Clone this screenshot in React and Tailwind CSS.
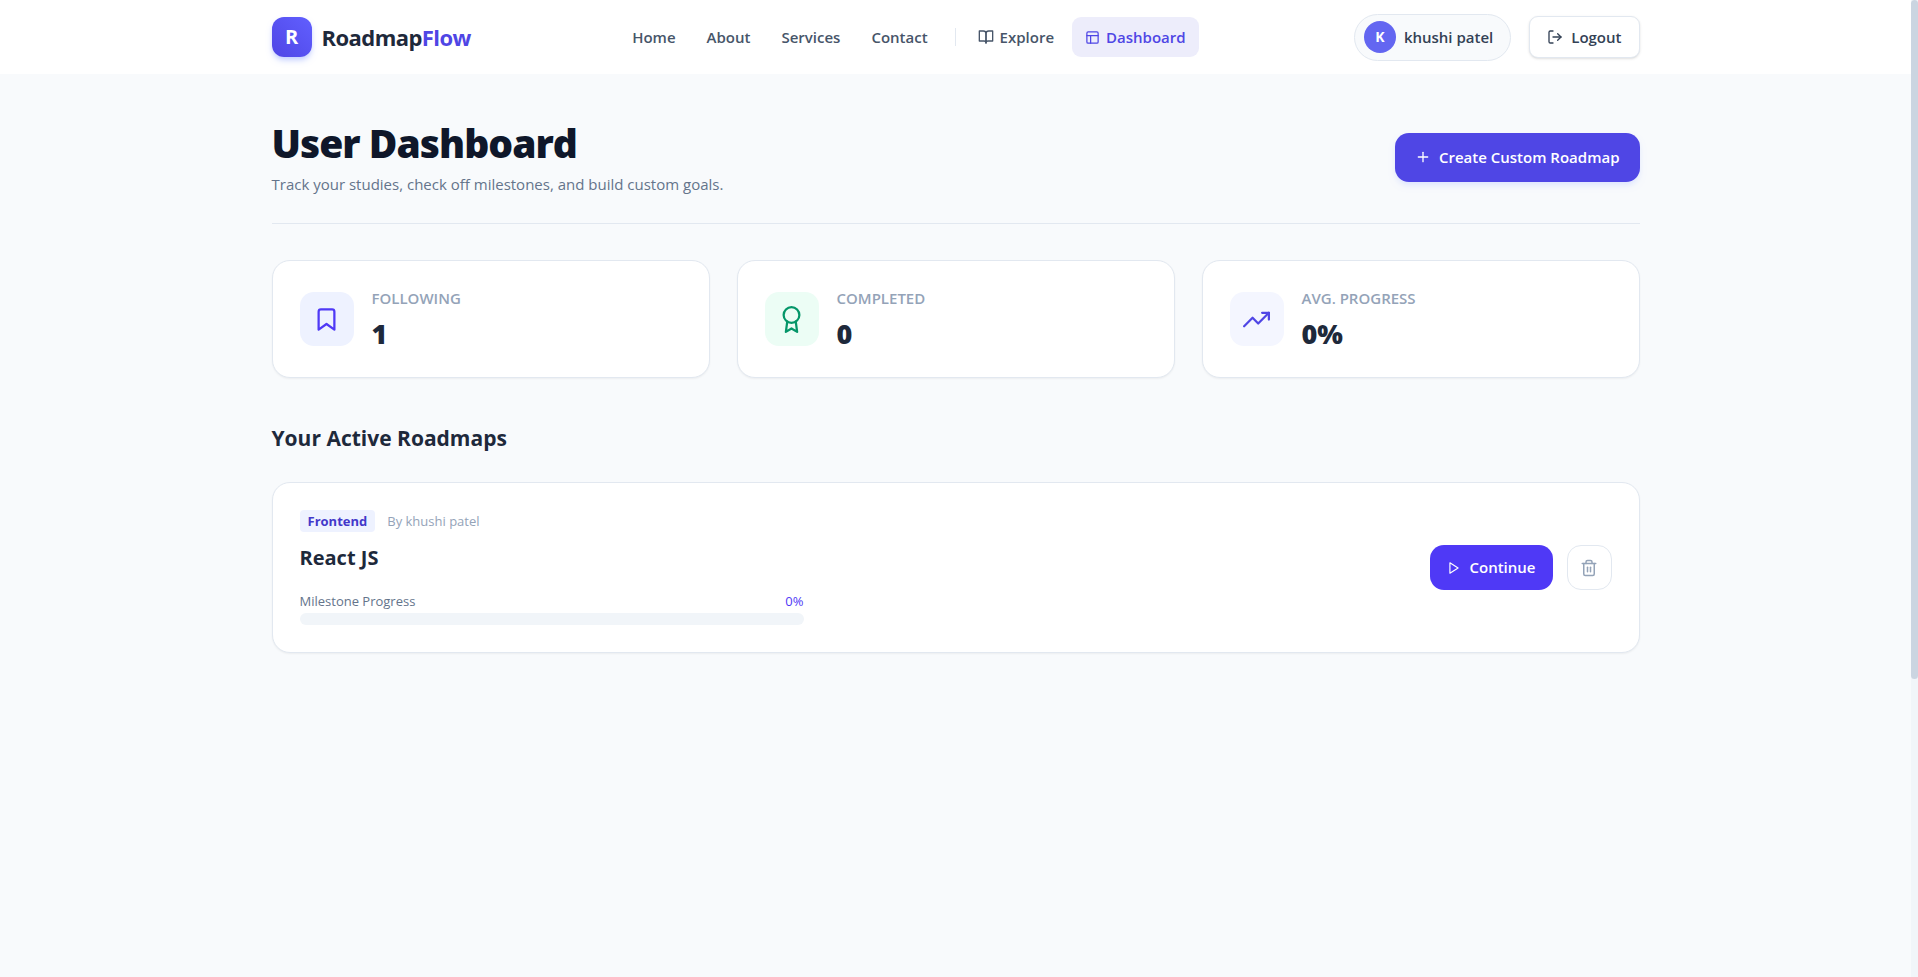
import {
  FiAward,
  FiBookmark,
  FiBookOpen,
  FiLayout,
  FiLogOut,
  FiPlay,
  FiPlus,
  FiTrash2,
  FiTrendingUp,
} from "react-icons/fi";

const links = ["Home", "About", "Services", "Contact"];

const stats = [
  { label: "FOLLOWING", value: "1", Icon: FiBookmark, tone: "bg-[#eef2ff] text-[#4f39f6]" },
  { label: "COMPLETED", value: "0", Icon: FiAward, tone: "bg-[#ecfdf5] text-[#059669]" },
  { label: "AVG. PROGRESS", value: "0%", Icon: FiTrendingUp, tone: "bg-[#f4f6ff] text-[#4f46e5]" },
];

const roadmaps = [
  { id: "react-js", title: "React JS", category: "Frontend", author: "khushi patel", progress: 0 },
];

function Header() {
  return (
    <header className="bg-white">
      <div className="mx-auto flex h-[74px] max-w-[1400px] items-center justify-between px-4">
        <a href="#home" className="flex items-center gap-[10px]">
          <span className="flex size-10 items-center justify-center rounded-xl bg-linear-to-tr from-[#4f46e5] to-[#615fff] text-xl font-bold text-white shadow-md shadow-indigo-200">
            R
          </span>
          <span className="text-[22px] leading-8 font-bold tracking-tight text-[#1e293b]">
            Roadmap<span className="text-[#4f46e5]">Flow</span>
          </span>
        </a>
        <nav className="flex items-center pl-[6px] text-[15px] font-semibold text-[#475569]">
          <div className="flex items-center gap-[31px]">
            {links.map((name) => (
              <a key={name} href={"#" + name.toLowerCase()}>
                {name}
              </a>
            ))}
          </div>
          <span className="mr-[22px] ml-[27px] h-[18px] w-px bg-[#e2e8f0]" />
          <a href="#explore" className="flex items-center gap-[6px]">
            <FiBookOpen className="size-4" />
            Explore
          </a>
          <a
            href="#dashboard"
            className="ml-[18px] flex h-10 items-center gap-[6px] rounded-[9px] bg-[#ededfb] px-[13px] text-[#4f46e5]"
          >
            <FiLayout className="size-[15px]" />
            Dashboard
          </a>
        </nav>
        <div className="flex items-center gap-[18px]">
          <div className="flex h-[47px] items-center gap-2 rounded-full border border-[#e2e8f0] bg-[#f8fafc] pr-[17px] pl-[9px]">
            <span className="flex size-8 items-center justify-center rounded-full bg-[#6366f1] text-sm font-bold text-white">
              K
            </span>
            <span className="text-[15px] font-semibold text-[#334155]">khushi patel</span>
          </div>
          <button
            type="button"
            className="flex h-[42px] items-center gap-2 rounded-[9px] border border-[#e2e8f0] bg-white px-[17px] text-[15px] font-semibold text-[#334155] shadow-sm"
          >
            <FiLogOut className="size-4" />
            Logout
          </button>
        </div>
      </div>
    </header>
  );
}

function StatCard({ label, value, Icon, tone }) {
  return (
    <div className="flex h-[118px] items-center gap-[18px] rounded-[18px] border border-[#e2e8f0] bg-white px-[27px] shadow-xs">
      <div className={"flex size-[54px] items-center justify-center rounded-[14px] " + tone}>
        <Icon className="size-[27px]" />
      </div>
      <div>
        <p className="text-[15px] leading-6 font-semibold text-[#94a3b8]">{label}</p>
        <p className="mt-[6px] text-[27px] leading-9 font-extrabold text-[#1e293b]">{value}</p>
      </div>
    </div>
  );
}

function RoadmapCard({ title, category, author, progress }) {
  return (
    <article className="flex items-center justify-between rounded-[18px] border border-[#e2e8f0] bg-white p-[27px] shadow-xs">
      <div className="w-full max-w-[504px]">
        <div className="flex items-center gap-3">
          <span className="rounded bg-[#eef2ff] px-2 py-[2px] text-[13px] leading-[18px] font-bold text-[#4338ca]">
            {category}
          </span>
          <span className="text-[13px] leading-[18px] text-[#94a3b8]">By {author}</span>
        </div>
        <h3 className="mt-3 text-[20px] leading-7 font-bold text-[#1e293b]">{title}</h3>
        <div className="mt-[19px] flex justify-between text-[13px] leading-5 font-medium">
          <span className="text-[#64748b]">Milestone Progress</span>
          <span className="text-[#4f39f6]">{progress}%</span>
        </div>
        <div className="mt-[2px] h-3 overflow-hidden rounded-full bg-[#f1f5f9]">
          <div className="h-full bg-[#4f39f6]" style={{ width: progress + "%" }} />
        </div>
      </div>
      <div className="flex items-center gap-[14px]">
        <button
          type="button"
          className="flex h-[45px] items-center gap-2 rounded-[14px] bg-[#4f39f6] px-[17px] text-[15px] font-semibold text-white"
        >
          <FiPlay className="size-[14px]" />
          Continue
        </button>
        <button
          type="button"
          aria-label={"Remove " + title}
          className="flex size-[45px] items-center justify-center rounded-[14px] border border-[#e2e8f0] text-[#94a3b8]"
        >
          <FiTrash2 className="size-[18px]" />
        </button>
      </div>
    </article>
  );
}

export default function App() {
  return (
    <div className="flex min-h-screen bg-[#f8fafc] font-['Open_Sans','Noto_Sans',sans-serif]">
      <div className="min-w-0 flex-1">
        <Header />
        <main className="mx-auto max-w-[1400px] px-4 pt-11 pb-16">
          <div className="flex items-center justify-between border-b border-[#e2e8f0] pb-[27px]">
            <div>
              <h1 className="text-[39px] leading-[50px] font-extrabold tracking-tight text-[#0f172a]">
                User Dashboard
              </h1>
              <p className="mt-1 text-[15px] leading-6 text-[#64748b]">
                Track your studies, check off milestones, and build custom goals.
              </p>
            </div>
            <button
              type="button"
              className="flex h-[49px] items-center gap-2 rounded-[14px] bg-[#4f46e5] px-5 text-[15px] font-semibold text-white shadow-md shadow-indigo-100"
            >
              <FiPlus className="size-4" />
              Create Custom Roadmap
            </button>
          </div>
          <section className="mt-9 grid grid-cols-3 gap-[27px]">
            {stats.map((stat) => (
              <StatCard key={stat.label} {...stat} />
            ))}
          </section>
          <h2 className="mt-11 text-[21px] leading-8 font-bold text-[#1e293b]">
            Your Active Roadmaps
          </h2>
          <section className="mt-7">
            {roadmaps.map((roadmap) => (
              <RoadmapCard key={roadmap.id} {...roadmap} />
            ))}
          </section>
        </main>
      </div>
      <div className="sticky top-0 h-screen w-[7px] shrink-0 bg-[#f1f5f9]" aria-hidden="true">
        <div className="h-[69.5%] rounded bg-[#cbd5e1]" />
      </div>
    </div>
  );
}
